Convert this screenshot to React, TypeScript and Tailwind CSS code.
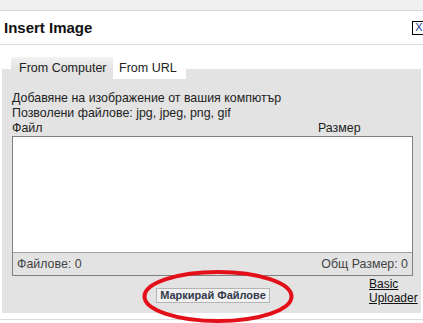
export default function App() {
  return (
    <div className="relative h-[323px] w-[423px] overflow-hidden bg-white font-['Liberation_Sans',Arial,sans-serif] text-[#222]">
      <div className="h-[11px] border-b border-[#d8d8d8] bg-[#f0f0f0]" />

      <header className="flex h-[34px] items-center border-b border-[#dcdcdc] pl-[4px]">
        <h1 className="flex-1 text-[15px] font-bold leading-none text-[#111]">Insert Image</h1>
        <span className="-mr-[3px] flex h-[14px] w-[14px] items-center justify-center border border-black text-[11px] leading-none text-[#1a3a8a]">
          X
        </span>
      </header>

      <div className="ml-[2px] w-[419px] pt-[12px]">
        <div className="relative z-10 ml-[9px] flex h-[22px] text-[12.5px] leading-[22px]">
          <div className="w-[102px] bg-[linear-gradient(#f3f3f3,#e3e3e3_50%)] pl-[8px]">From Computer</div>
          <div className="w-[73px] bg-white pl-[6px]">From URL</div>
        </div>

        <div className="-mt-[10px] h-[244px] bg-[#e3e3e3] pl-[10px] pr-[7px] pt-[22px] text-[12.4px] leading-[15px]">
          <p>Добавяне на изображение от вашия компютър</p>
          <p>Позволени файлове: jpg, jpeg, png, gif</p>
          <div className="flex">
            <span className="flex-1">Файл</span>
            <span className="w-[96px]">Размер</span>
          </div>

          <div className="w-[401px] border border-[#808080]">
            <div className="h-[115px] bg-white" />
            <div className="flex h-[23px] items-center justify-between border-t border-[#a0a0a0] px-[4px] text-[#444]">
              <span>Файлове: 0</span>
              <span>Общ Размер: 0</span>
            </div>
          </div>

          <div className="grid grid-cols-[1fr_auto_1fr]">
            <div />
            <button className="mt-[12px] h-[15px] border border-[#b4b4b4] bg-[#f0f0f0] px-[3px] text-[11px] font-bold leading-[13px] text-[#333a4a]">
              Маркирай Файлове
            </button>
            <div className="flex justify-end">
              <a className="mr-[1px] w-[44px] pt-[1px] text-[12px] leading-[14px] text-[#111] underline">
                Basic Uploader
              </a>
            </div>
          </div>
        </div>
      </div>

      <div className="mt-[6px] h-px bg-[#dcdcdc]" />

      <svg className="absolute left-[142px] top-[270px]" width="152" height="54" viewBox="0 0 152 54">
        <ellipse cx="76" cy="26.5" rx="73.5" ry="24.5" fill="none" stroke="#e3101a" strokeWidth="4" />
      </svg>
    </div>
  );
}
